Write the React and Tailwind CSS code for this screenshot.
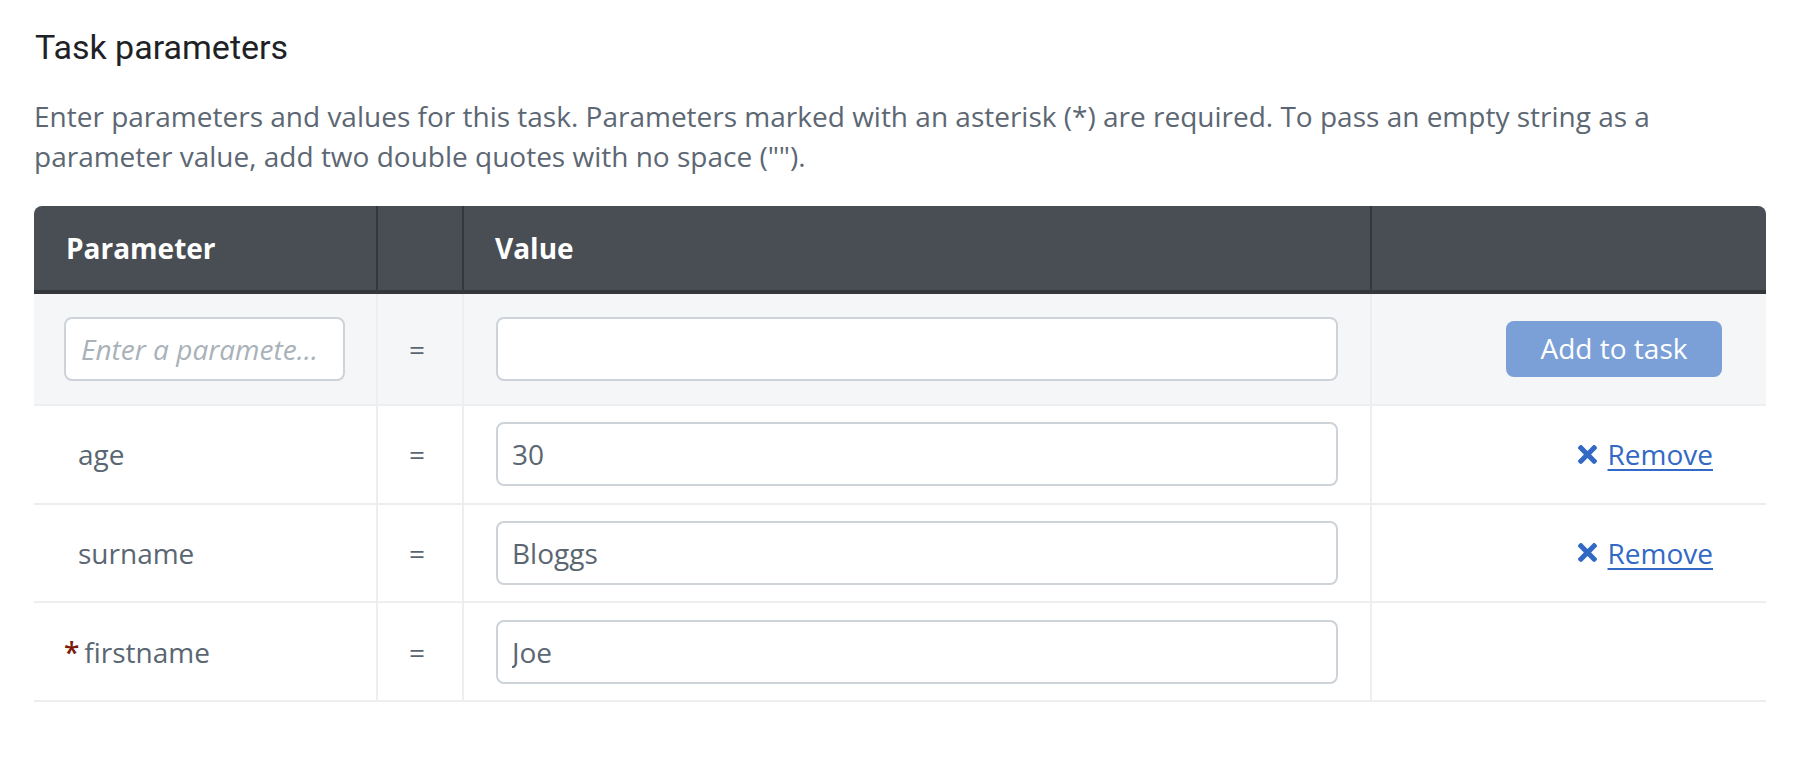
import React from "react";

function TimesIcon() {
  return (
    <svg viewBox="0 80 352 352" className="w-[19px] h-[19px] shrink-0" fill="#3269c5" aria-hidden="true">
      <path d="M242.72 256l100.07-100.07c12.28-12.28 12.28-32.19 0-44.48l-22.24-22.24c-12.28-12.28-32.19-12.28-44.48 0L176 189.28 75.93 89.21c-12.28-12.28-32.19-12.28-44.48 0L9.21 111.45c-12.28 12.28-12.28 32.19 0 44.48L109.28 256 9.21 356.07c-12.28 12.28-12.28 32.19 0 44.48l22.24 22.24c12.28 12.28 32.2 12.28 44.48 0L176 322.72l100.07 100.07c12.28 12.28 32.2 12.28 44.48 0l22.24-22.24c12.28-12.28 12.28-32.19 0-44.48L242.72 256z" />
    </svg>
  );
}

const rows = [
  { name: "age", value: "30", removable: true },
  { name: "surname", value: "Bloggs", removable: true },
  { name: "firstname", value: "Joe", required: true },
];

export default function App() {
  return (
    <div className="w-[1810px] min-h-[762px] bg-white pl-[34px] pr-[44px] pt-[27px] font-['Open_Sans',sans-serif]">
      <h2 className="font-['Roboto',sans-serif] text-[34px] leading-[40px] font-normal text-[#1e2226] pl-[1px]">
        Task parameters
      </h2>
      <p className="mt-[30px] text-[28px] leading-[39.5px] text-[#5c6773]">
        Enter parameters and values for this task. Parameters marked with an asterisk (*) are required. To pass an empty string as a parameter value, add two double quotes with no space ("").
      </p>

      <div className="mt-[30px]">
        <div className="grid grid-cols-[344px_86px_908px_394px] h-[88px] bg-[#494d54] border-b-4 border-[#34383c] rounded-t-[8px] text-[28px] font-bold text-white">
          <div className="flex items-center pl-[32px] border-r-2 border-[#34383c]">Parameter</div>
          <div className="border-r-2 border-[#34383c]"></div>
          <div className="flex items-center pl-[31px] border-r-2 border-[#34383c]">Value</div>
          <div></div>
        </div>

        <div className="grid grid-cols-[344px_86px_908px_394px] h-[112px] bg-[#f5f6f8] border-b-2 border-[#eceef0] text-[28px] text-[#5a6672]">
          <div className="flex items-center pl-[30px] border-r-2 border-[#eceef0]">
            <input
              placeholder="Enter a paramete…"
              className="w-[281px] h-[64px] bg-white border-2 border-[#cdd3d8] rounded-[8px] px-[15px] text-[28px] italic placeholder:text-[#a9b1b9] outline-none"
            />
          </div>
          <div className="flex items-center justify-center pr-[6px] border-r-2 border-[#eceef0]">=</div>
          <div className="flex items-center px-[32px] border-r-2 border-[#eceef0]">
            <input className="w-full h-[64px] bg-white border-2 border-[#cdd3d8] rounded-[8px] px-[14px] text-[28px] outline-none" />
          </div>
          <div className="flex items-center justify-end pr-[44px]">
            <button className="w-[216px] h-[56px] rounded-[8px] bg-[#7ba0d8] text-white text-[28px] pb-[2px]">
              Add to task
            </button>
          </div>
        </div>

        {rows.map((r) => (
          <div
            key={r.name}
            className="grid grid-cols-[344px_86px_908px_394px] h-[98.67px] bg-white border-b-2 border-[#eceef0] text-[28px] text-[#5a6672]"
          >
            <div className={`flex items-center border-r-2 border-[#eceef0] ${r.required ? "pl-[30px]" : "pl-[44px]"}`}>
              {r.required && <span className="text-[#7b1b0b] font-semibold mr-[5px]">*</span>}
              <span>{r.name}</span>
            </div>
            <div className="flex items-center justify-center pr-[6px] border-r-2 border-[#eceef0]">=</div>
            <div className="flex items-center px-[32px] border-r-2 border-[#eceef0]">
              <input
                defaultValue={r.value}
                className="w-full h-[64px] bg-white border-2 border-[#cdd3d8] rounded-[8px] px-[14px] text-[28px] text-[#5a6672] outline-none"
              />
            </div>
            <div className="flex items-center justify-end pr-[53px]">
              {r.removable && (
                <>
                  <TimesIcon />
                  <a href="#" className="ml-[11px] text-[#3269c5] underline decoration-2 underline-offset-[4px]">
                    Remove
                  </a>
                </>
              )}
            </div>
          </div>
        ))}
      </div>
    </div>
  );
}
